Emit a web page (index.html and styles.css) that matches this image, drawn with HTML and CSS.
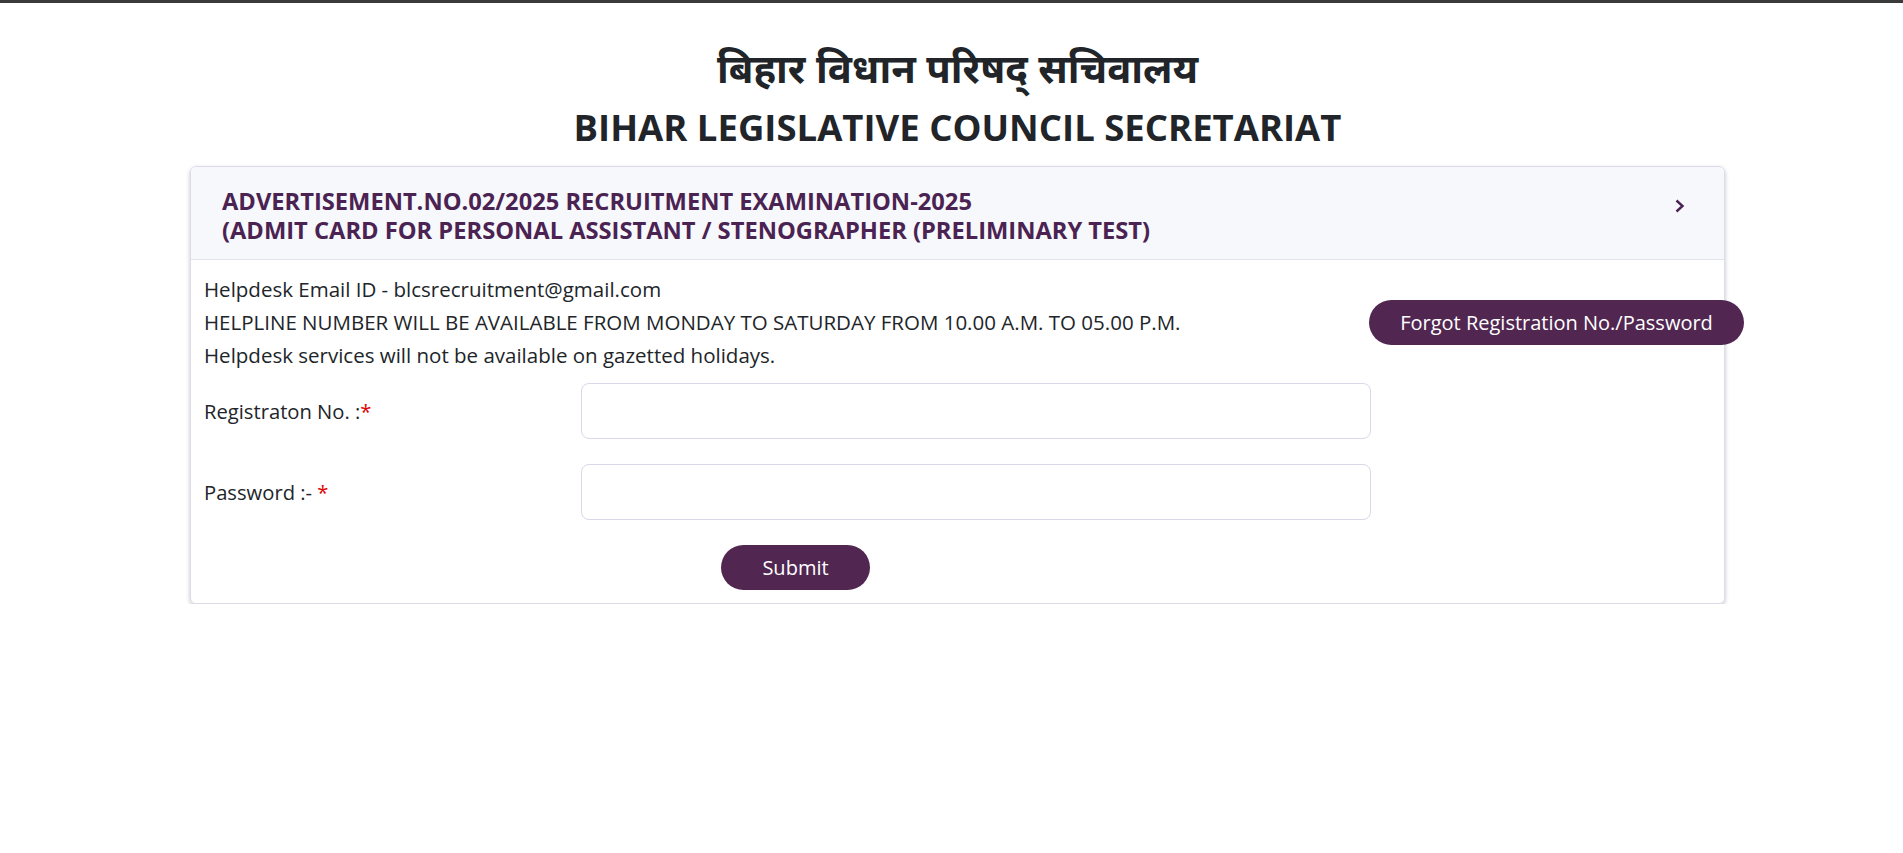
FILE: index.html
```html
<!DOCTYPE html>
<html lang="en">
<head>
<meta charset="utf-8">
<title>Bihar Legislative Council Secretariat</title>
<link rel="stylesheet" href="styles.css">
</head>
<body>
<div class="topbar"></div>
<div class="page">
  <header class="titles">
    <h1 class="hindi">बिहार विधान परिषद् सचिवालय</h1>
    <h2 class="english">BIHAR LEGISLATIVE COUNCIL SECRETARIAT</h2>
  </header>
  <section class="card">
    <div class="card-head">
      <div class="head-text">
        <div>ADVERTISEMENT.NO.02/2025 RECRUITMENT EXAMINATION-2025</div>
        <div>(ADMIT CARD FOR PERSONAL ASSISTANT / STENOGRAPHER (PRELIMINARY TEST)</div>
      </div>
      <svg class="chevron" width="10" height="14" viewBox="0 0 10 14"><path d="M1.5 1.5 L7.5 7 L1.5 12.5" fill="none" stroke="#4b2352" stroke-width="2.4"/></svg>
    </div>
    <div class="card-body">
      <div class="help-row">
        <div class="help-text">
          <p>Helpdesk Email ID - blcsrecruitment@gmail.com</p>
          <p>HELPLINE NUMBER WILL BE AVAILABLE FROM MONDAY TO SATURDAY FROM 10.00 A.M. TO 05.00 P.M.</p>
          <p>Helpdesk services will not be available on gazetted holidays.</p>
        </div>
        <button class="btn btn-forgot" type="button">Forgot Registration No./Password</button>
      </div>
      <form class="login-form">
        <div class="form-row">
          <label class="form-label">Registraton No. :<span class="req">*</span></label>
          <input class="form-input" type="text">
        </div>
        <div class="form-row">
          <label class="form-label">Password :- <span class="req">*</span></label>
          <input class="form-input" type="password">
        </div>
        <div class="submit-row">
          <button class="btn btn-submit" type="button">Submit</button>
        </div>
      </form>
    </div>
  </section>
</div>
</body>
</html>
```

FILE: styles.css
```css
* { box-sizing: border-box; }
html, body { margin: 0; padding: 0; background: #fff; }
body {
  font-family: "Open Sans", "Noto Sans", sans-serif;
  color: #212529;
}
.topbar { height: 3px; background: #3a3a3a; }
.page { padding-left: 12px; }
.titles { text-align: center; padding-top: 38px; }
.hindi {
  margin: 0;
  font-family: "Noto Sans", "Open Sans", sans-serif;
  font-size: 40px;
  font-weight: 700;
  line-height: 54px;
}
.english {
  margin: 8px 0 0;
  font-size: 36.5px;
  font-weight: 700;
  line-height: 48px;
}
.card {
  width: 1535px;
  margin: 15px auto 0;
  border: 1px solid #dcdbe9;
  border-radius: 6px;
  box-shadow: 0 2px 4px rgba(40, 40, 80, 0.28);
}
.card-head {
  display: flex;
  align-items: center;
  justify-content: space-between;
  height: 93px;
  padding: 0 39px 0 31px;
  background: #f7f8fc;
  border-bottom: 1px solid #e3e3f0;
  border-radius: 6px 6px 0 0;
}
.head-text {
  font-size: 23.7px;
  font-weight: 700;
  line-height: 29px;
  color: #4b2352;
  padding-top: 5px;
}
.chevron { margin-top: -15px; }
.card-body { padding: 13px 13px 13px; }
.help-row {
  display: flex;
  align-items: center;
  justify-content: space-between;
  margin-right: -33px;
}
.help-text p {
  margin: 0;
  font-size: 20.5px;
  line-height: 33px;
}
.btn {
  border: 0;
  background: #512752;
  color: #fff;
  font-family: inherit;
  font-size: 20px;
  border-radius: 23px;
  height: 45px;
  cursor: pointer;
}
.btn-forgot { width: 375px; }
.login-form { margin-top: 11px; }
.form-row {
  display: flex;
  align-items: center;
  margin-bottom: 25px;
}
.form-label {
  width: 377px;
  font-size: 20.2px;
}
.req { color: #e00000; }
.form-input {
  width: 790px;
  height: 56px;
  border: 1px solid #d9d8e8;
  border-radius: 8px;
  font-size: 18px;
  padding: 0 12px;
}
.submit-row { padding-left: 517px; }
.btn-submit { width: 149px; }
```
